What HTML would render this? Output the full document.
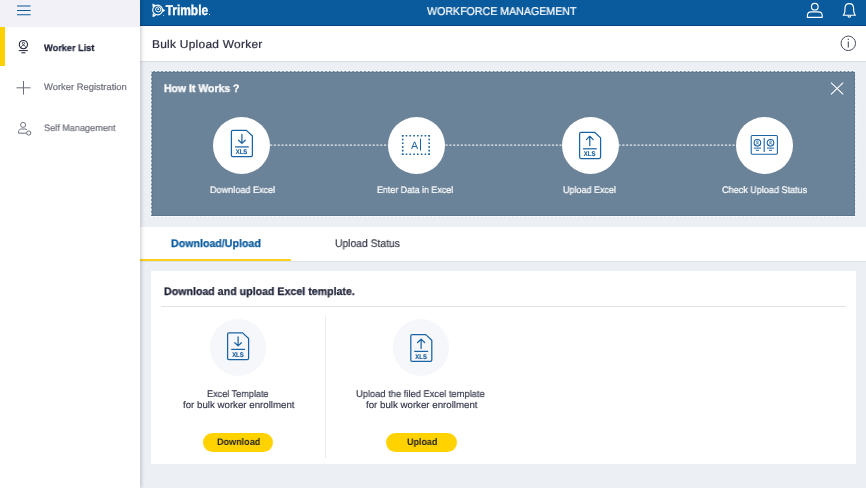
<!DOCTYPE html>
<html lang="en">
<head>
<meta charset="utf-8">
<title>Workforce Management - Bulk Upload Worker</title>
<style>
*{box-sizing:border-box;margin:0;padding:0}
html,body{width:866px;height:488px;overflow:hidden}
body{position:relative;background:#eceff4;font-family:"Liberation Sans",Arial,sans-serif;-webkit-font-smoothing:antialiased}
.abs{position:absolute}
.t{position:absolute;white-space:nowrap;transform-origin:0 50%;text-rendering:geometricPrecision;will-change:transform}
#header{left:139.6px;top:0;width:726.4px;height:25.8px;background:#0a5b9d;box-shadow:inset 0 -1px 0 rgba(0,35,90,.4)}
#titlebar{left:139.6px;top:25.8px;width:726.4px;height:35.3px;background:#fff;box-shadow:0 1px 1px rgba(0,0,0,.07)}
#sidebar{left:0;top:0;width:139.6px;height:488px;background:#fff;box-shadow:1px 0 4px rgba(0,0,0,.22)}
#sidetop{left:0;top:0;width:139.6px;height:26.5px;background:#f1f1f7}
#active{left:0;top:26.5px;width:5px;height:39px;background:#ffd100}
#panel{left:151.3px;top:71.4px;width:704.2px;height:144.8px;background:#6b8399}
#tabs{left:139.6px;top:226.5px;width:726.4px;height:34.5px;background:#fff;box-shadow:0 1px 1px rgba(0,0,0,.05)}
#tabline{left:139.6px;top:258.5px;width:151.9px;height:2.5px;background:#fdd01a}
#card{left:151px;top:271px;width:705px;height:192.5px;background:#fff}
#hr{left:161px;top:306px;width:685px;height:1px;background:#e1e3e8}
#vr{left:325.3px;top:315px;width:1px;height:142.5px;background:#eaecf0}
.circ{position:absolute;width:57px;height:57px;border-radius:50%;background:#fff}
.circ2{position:absolute;width:56.5px;height:56.5px;border-radius:50%;background:#f6f7fa}
.btn{position:absolute;height:19px;width:70.6px;border-radius:9.5px;background:#ffd200;top:432.7px}
svg{position:absolute;left:0;top:0;overflow:visible;text-rendering:geometricPrecision;will-change:transform}
</style>
</head>
<body>
<div id="header" class="abs"></div>
<div id="titlebar" class="abs"></div>
<div id="panel" class="abs"></div>
<div id="tabs" class="abs"></div>
<div id="tabline" class="abs"></div>
<div id="card" class="abs"></div>
<div id="hr" class="abs"></div>
<div id="vr" class="abs"></div>
<div class="circ" style="left:212.6px;top:116.7px"></div>
<div class="circ" style="left:388.4px;top:116.7px"></div>
<div class="circ" style="left:561.5px;top:116.7px"></div>
<div class="circ" style="left:735.6px;top:116.7px"></div>
<div class="circ2" style="left:209.75px;top:319.4px"></div>
<div class="circ2" style="left:392.75px;top:319.4px"></div>
<div class="btn" style="left:202.8px"></div>
<div class="btn" style="left:386px"></div>
<div id="sidebar" class="abs"></div>
<div id="sidetop" class="abs"></div>
<div id="active" class="abs"></div>

<svg width="866" height="488" viewBox="0 0 866 488">
 <!-- hamburger -->
 <g stroke="#0a5b9d" stroke-width="1.1" fill="none">
  <path d="M17 6H30.6M17 10.45H30.6M17 14.75H30.6"/>
 </g>
 <!-- trimble logo -->
 <g fill="none" stroke="#fff">
  <circle cx="157.6" cy="10" r="4.9" stroke-width="1.15"/>
  <circle cx="158.2" cy="9.4" r="2.6" stroke-width="1"/>
  <circle cx="158.3" cy="9.2" r=".85" fill="#fff" stroke="none"/>
  <path d="M152.7 3.9L155.6 5.3L152.9 7Z M152.9 16.9L152.9 13.8L155.7 15.5Z M165 10.4L162.3 8.8L162.3 12Z" fill="#fff" stroke-width=".5" stroke-linejoin="round"/>
 </g>
 <circle cx="163.6" cy="15.2" r=".5" fill="#fff"/>
 <text x="165.7" y="15.4" font-family="Liberation Sans, Arial, sans-serif" font-weight="700" font-size="14.3" fill="#fff" stroke="#fff" stroke-width=".35" textLength="42.4" lengthAdjust="spacingAndGlyphs">Trimble</text>
 <text x="208.8" y="15.4" font-family="Liberation Sans, Arial, sans-serif" font-weight="700" font-size="6" fill="#fff">.</text>
 <!-- header user icon -->
 <g fill="none" stroke="#fff" stroke-width="1.15">
  <circle cx="814.8" cy="6.7" r="3.35"/>
  <path d="M807.4 17.3V15.6C807.4 13.4 809.2 11.9 811.4 11.9H818.2C820.4 11.9 822.2 13.4 822.2 15.6V17.3Z" stroke-linejoin="round"/>
  <!-- bell -->
  <path d="M843.2 15.2H855.4C853.8 13.8 853.6 12.4 853.6 8.4C853.6 5.4 851.8 3.6 849.3 3.6C846.8 3.6 845 5.4 845 8.4C845 12.4 844.8 13.8 843.2 15.2Z" stroke-linejoin="round"/>
  <path d="M848 15.6C848 16.6 848.6 17.2 849.3 17.2C850 17.2 850.6 16.6 850.6 15.6"/>
 </g>
 <!-- info icon -->
 <g fill="none" stroke="#4a4d5c" stroke-width="1">
  <circle cx="848.3" cy="43.3" r="7.25"/>
  <path d="M848.3 41.4V47.4" stroke-width="1.1"/>
  <path d="M848.3 38.8V40" stroke-width="1.1"/>
 </g>
 <!-- sidebar icon 1 -->
 <g fill="none" stroke="#1f2238" stroke-width="1">
  <circle cx="23.4" cy="44.6" r="4.1" stroke-width="1.1"/>
  <circle cx="23.4" cy="43.4" r="1.1" stroke-width=".8"/>
  <path d="M21.2 47.5C21.4 45.9 22.2 45.3 23.4 45.3C24.6 45.3 25.4 45.9 25.6 47.5" stroke-width=".8"/>
  <path d="M18.8 50.6H27.8M21.4 52.8H25.4"/>
 </g>
 <!-- sidebar plus -->
 <path d="M23.5 81V94.6M16.5 87.8H30.5" stroke="#6c6f7d" stroke-width="1" fill="none"/>
 <!-- sidebar user-cog -->
 <g fill="none" stroke="#6c6f7d" stroke-width="1">
  <circle cx="23.1" cy="124.9" r="2.5"/>
  <path d="M26.4 133.2H18.6V131.6C18.6 130 19.8 129 21.4 129H24.8C25.8 129 26.6 129.4 27 130"/>
  <circle cx="28.7" cy="133" r="2.1"/>
 </g>
 <!-- panel dashed border -->
 <rect x="152.1" y="72.2" width="702.6" height="143.3" fill="none" stroke="#4f6b84" stroke-opacity=".55" stroke-width="1"/>
 <rect x="151.1" y="71.15" width="704.6" height="145.3" fill="none" stroke="#ffffff" stroke-opacity=".95" stroke-width="1.1" stroke-dasharray="2.4 1.5"/>
 <!-- close X -->
 <path d="M831 82.6L843.2 94.4M843.2 82.6L831 94.4" stroke="#fff" stroke-width="1.1" fill="none"/>
 <!-- connector dashed lines -->
 <g stroke="#e3e9ee" stroke-width="1.3" stroke-dasharray="2.2 1.6" fill="none">
  <path d="M270 145.2H388.5M445.5 145.2H561.5M618.5 145.2H735.5"/>
 </g>

 <!-- step icon 1: download file -->
 <g id="fileDown" fill="none" stroke="#1a64a4" stroke-width="1.25" stroke-linejoin="round" stroke-linecap="round">
  <path d="M232.8 130.4H246.4L252.4 136V155.2C252.4 156 251.8 156.6 251 156.6H232.8C232 156.6 231.4 156 231.4 155.2V131.8C231.4 131 232 130.4 232.8 130.4Z"/>
  <path d="M241.9 134.4V143.2M238.6 140.2L241.9 143.4L245.2 140.2"/>
  <path d="M235 146.9H248.8" stroke-linecap="butt"/>
 </g>
 <text x="241.5" y="153.9" text-anchor="middle" font-family="Liberation Sans, Arial, sans-serif" font-weight="700" font-size="6.9" fill="#185f9f" stroke="#185f9f" stroke-width=".2" textLength="11.5" lengthAdjust="spacingAndGlyphs">XLS</text>

 <!-- step icon 2: text box -->
 <g fill="#1a64a4">
  <g id="dots"></g>
 </g>
 <g stroke="#1a64a4" stroke-width="1.6" fill="none">
  <path d="M401.9 135.8H430M401.9 154.3H430" stroke-dasharray="1.6 2.186"/>
  <path d="M402.7 135V155.1M429.2 135V155.1" stroke-dasharray="1.6 2.1"/>
 </g>
 <text x="411.1" y="148.5" font-family="Liberation Sans, Arial, sans-serif" font-size="10.6" fill="#1a64a4">A</text>
 <path d="M420.5 138.7V150.6" stroke="#1a64a4" stroke-width="1" fill="none"/>

 <!-- step icon 3: upload file -->
 <g fill="none" stroke="#1a64a4" stroke-width="1.25" stroke-linejoin="round" stroke-linecap="round">
  <path d="M581 132.3H594.6L600.6 137.9V157.1C600.6 157.9 600 158.5 599.2 158.5H581C580.2 158.5 579.6 157.9 579.6 157.1V133.7C579.6 132.9 580.2 132.3 581 132.3Z"/>
  <path d="M589.8 145.6V136.6M586.4 139.6L589.8 136.3L593.2 139.6"/>
  <path d="M583 148.8H596.8" stroke-linecap="butt"/>
 </g>
 <text x="589.6" y="155.8" text-anchor="middle" font-family="Liberation Sans, Arial, sans-serif" font-weight="700" font-size="6.9" fill="#185f9f" stroke="#185f9f" stroke-width=".2" textLength="11.5" lengthAdjust="spacingAndGlyphs">XLS</text>

 <!-- step icon 4: status cards -->
 <g fill="none" stroke="#1a64a4" stroke-width="1.1">
  <rect x="751.2" y="135.5" width="26.2" height="18.8" rx="1.2"/>
  <path d="M764.2 138.1V152.1"/>
  <circle cx="757.4" cy="142.8" r="3.3"/>
  <circle cx="770.5" cy="142.8" r="3.3"/>
  <circle cx="757.4" cy="141.9" r=".9" stroke-width=".7"/>
  <circle cx="770.5" cy="141.9" r=".9" stroke-width=".7"/>
  <path d="M755.6 145.2C755.8 144 756.4 143.5 757.4 143.5C758.4 143.5 759 144 759.2 145.2M768.7 145.2C768.9 144 769.5 143.5 770.5 143.5C771.5 143.5 772.1 144 772.3 145.2" stroke-width=".7"/>
  <path d="M753.8 148.1H761M755.8 150.3H758.9M766.9 148.1H774.1M768.9 150.3H772" stroke-width="1"/>
 </g>

 <!-- card icon 1 -->
 <g fill="none" stroke="#1a64a4" stroke-width="1.25" stroke-linejoin="round" stroke-linecap="round">
  <path d="M229 332.9H242.6L248.6 338.5V358.2C248.6 359 248 359.6 247.2 359.6H229C228.2 359.6 227.6 359 227.6 358.2V334.3C227.6 333.5 228.2 332.9 229 332.9Z"/>
  <path d="M238.1 336.9V345.7M234.8 342.7L238.1 345.9L241.4 342.7"/>
  <path d="M231.2 349.4H245" stroke-linecap="butt"/>
 </g>
 <text x="237.9" y="356.6" text-anchor="middle" font-family="Liberation Sans, Arial, sans-serif" font-weight="700" font-size="6.9" fill="#185f9f" stroke="#185f9f" stroke-width=".2" textLength="11.5" lengthAdjust="spacingAndGlyphs">XLS</text>
 <!-- card icon 2 -->
 <g transform="translate(0.2 1.7)">
 <g fill="none" stroke="#1a64a4" stroke-width="1.25" stroke-linejoin="round" stroke-linecap="round">
  <path d="M412 332.9H425.6L431.6 338.5V358.2C431.6 359 431 359.6 430.2 359.6H412C411.2 359.6 410.6 359 410.6 358.2V334.3C410.6 333.5 411.2 332.9 412 332.9Z"/>
  <path d="M420.9 346.8V337.6M417.4 340.8L420.9 337.4L424.4 340.8"/>
  <path d="M414 349.7H428" stroke-linecap="butt"/>
 </g>
 <text x="420.9" y="356.9" text-anchor="middle" font-family="Liberation Sans, Arial, sans-serif" font-weight="700" font-size="6.9" fill="#185f9f" stroke="#185f9f" stroke-width=".2" textLength="11.5" lengthAdjust="spacingAndGlyphs">XLS</text>
 </g>
</svg>
<div id="t_hdr" class="t" style="left:427.40px;top:4.58px;font-size:11.30px;line-height:15px;font-weight:400;color:#ffffff;letter-spacing:0px;-webkit-text-stroke:0.22px #ffffff;transform:scaleX(0.9409)">WORKFORCE MANAGEMENT</div>
<div id="t_title" class="t" style="left:151.80px;top:37.55px;font-size:11.40px;line-height:15px;font-weight:400;color:#2c2f42;letter-spacing:0.25px;-webkit-text-stroke:0.22px #2c2f42;transform:scaleX(1.0476)">Bulk Upload Worker</div>
<div id="t_s1" class="t" style="left:44.40px;top:41.74px;font-size:9.40px;line-height:12px;font-weight:700;color:#1f2238;letter-spacing:0px;-webkit-text-stroke:0.25px #1f2238;transform:scaleX(0.9808)">Worker List</div>
<div id="t_s2" class="t" style="left:43.80px;top:80.78px;font-size:9.30px;line-height:12px;font-weight:400;color:#70737f;letter-spacing:0px;-webkit-text-stroke:0.22px #70737f;transform:scaleX(1.0098)">Worker Registration</div>
<div id="t_s3" class="t" style="left:44.30px;top:121.78px;font-size:9.30px;line-height:12px;font-weight:400;color:#70737f;letter-spacing:0px;-webkit-text-stroke:0.22px #70737f;transform:scaleX(0.9809)">Self Management</div>
<div id="t_how" class="t" style="left:164.20px;top:82.22px;font-size:10.90px;line-height:14px;font-weight:700;color:#ffffff;letter-spacing:0px;-webkit-text-stroke:0.3px #ffffff;transform:scaleX(0.9615)">How It Works ?</div>
<div id="t_l1" class="t" style="left:209.60px;top:184.71px;font-size:9.50px;line-height:12px;font-weight:400;color:#ffffff;letter-spacing:0px;-webkit-text-stroke:0.22px #ffffff;transform:scaleX(0.9559)">Download Excel</div>
<div id="t_l2" class="t" style="left:377.40px;top:184.71px;font-size:9.50px;line-height:12px;font-weight:400;color:#ffffff;letter-spacing:0px;-webkit-text-stroke:0.22px #ffffff;transform:scaleX(0.9359)">Enter Data in Excel</div>
<div id="t_l3" class="t" style="left:562.80px;top:184.71px;font-size:9.50px;line-height:12px;font-weight:400;color:#ffffff;letter-spacing:0px;-webkit-text-stroke:0.22px #ffffff;transform:scaleX(0.9464)">Upload Excel</div>
<div id="t_l4" class="t" style="left:721.80px;top:184.71px;font-size:9.50px;line-height:12px;font-weight:400;color:#ffffff;letter-spacing:0px;-webkit-text-stroke:0.22px #ffffff;transform:scaleX(0.9540)">Check Upload Status</div>
<div id="t_tab1" class="t" style="left:171.00px;top:237.19px;font-size:11.00px;line-height:14px;font-weight:700;color:#0a5b9d;letter-spacing:0px;-webkit-text-stroke:0.25px #0a5b9d;transform:scaleX(0.9677)">Download/Upload</div>
<div id="t_tab2" class="t" style="left:334.80px;top:237.19px;font-size:11.00px;line-height:14px;font-weight:400;color:#3a3d4d;letter-spacing:0px;-webkit-text-stroke:0.22px #3a3d4d;transform:scaleX(0.9392)">Upload Status</div>
<div id="t_head" class="t" style="left:164.40px;top:285.19px;font-size:11.00px;line-height:14px;font-weight:700;color:#1f2238;letter-spacing:0px;-webkit-text-stroke:0.25px #1f2238;transform:scaleX(0.9665)">Download and upload Excel template.</div>
<div id="t_c1a" class="t" style="left:207.00px;top:388.14px;font-size:9.70px;line-height:13px;font-weight:400;color:#33364a;letter-spacing:0px;-webkit-text-stroke:0.15px #33364a;transform:scaleX(0.9401)">Excel Template</div>
<div id="t_c1b" class="t" style="left:182.60px;top:399.14px;font-size:9.70px;line-height:13px;font-weight:400;color:#33364a;letter-spacing:0px;-webkit-text-stroke:0.15px #33364a;transform:scaleX(1.0009)">for bulk worker enrollment</div>
<div id="t_c2a" class="t" style="left:356.00px;top:388.14px;font-size:9.70px;line-height:13px;font-weight:400;color:#33364a;letter-spacing:0px;-webkit-text-stroke:0.15px #33364a;transform:scaleX(0.9635)">Upload the filed Excel template</div>
<div id="t_c2b" class="t" style="left:365.60px;top:399.14px;font-size:9.70px;line-height:13px;font-weight:400;color:#33364a;letter-spacing:0px;-webkit-text-stroke:0.15px #33364a;transform:scaleX(1.0009)">for bulk worker enrollment</div>
<div id="t_b1" class="t" style="left:216.60px;top:436.67px;font-size:9.60px;line-height:12px;font-weight:700;color:#262626;letter-spacing:0px;-webkit-text-stroke:0.0px #262626;transform:scaleX(0.9435)">Download</div>
<div id="t_b2" class="t" style="left:406.60px;top:436.67px;font-size:9.60px;line-height:12px;font-weight:700;color:#262626;letter-spacing:0px;-webkit-text-stroke:0.0px #262626;transform:scaleX(0.9317)">Upload</div>
</body>
</html>
